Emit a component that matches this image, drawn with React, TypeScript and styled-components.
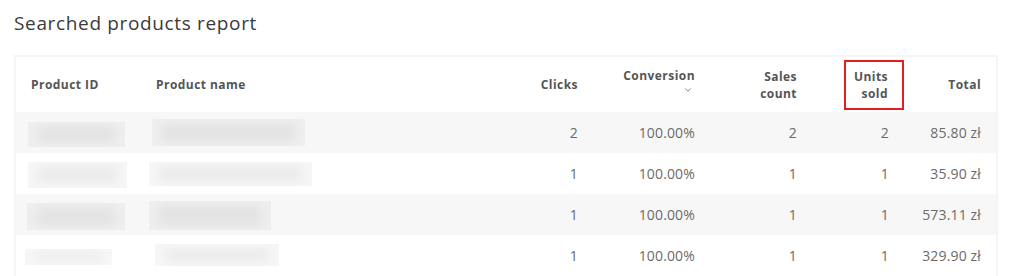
import React from "react";
import styled, { createGlobalStyle } from "styled-components";
import { ChevronDown } from "lucide-react";

type Blurred = { x: number; y: number; w: number; h: number };

type Row = {
  id: Blurred;
  name: Blurred;
  clicks: number;
  conversion: string;
  sales: number;
  units: number;
  total: string;
};

const rows: Row[] = [
  { id: { x: 12, y: 10, w: 97, h: 25 }, name: { x: 11, y: 7, w: 153, h: 27 }, clicks: 2, conversion: "100.00%", sales: 2, units: 2, total: "85.80 zł" },
  { id: { x: 12, y: 9, w: 99, h: 26 }, name: { x: 8, y: 9, w: 163, h: 24 }, clicks: 1, conversion: "100.00%", sales: 1, units: 1, total: "35.90 zł" },
  { id: { x: 11, y: 9, w: 98, h: 27 }, name: { x: 8, y: 7, w: 122, h: 29 }, clicks: 1, conversion: "100.00%", sales: 1, units: 1, total: "573.11 zł" },
  { id: { x: 9, y: 14, w: 87, h: 16 }, name: { x: 14, y: 9, w: 124, h: 22 }, clicks: 1, conversion: "100.00%", sales: 1, units: 1, total: "329.90 zł" },
];

const GlobalStyle = createGlobalStyle`
  body {
    margin: 0;
    background: #fff;
    font-family: "Open Sans", "Liberation Sans", sans-serif;
  }
`;

const Page = styled.div`
  padding: 10px 14px 0;
`;

const Title = styled.h2`
  margin: 0 0 19px;
  font-size: 19px;
  line-height: 26px;
  font-weight: 400;
  color: #3a3a3a;
  letter-spacing: 0.65px;
`;

const Frame = styled.div`
  border: 2px solid #f5f5f5;
  border-bottom: none;
`;

const Table = styled.table`
  width: 100%;
  border-collapse: collapse;
  table-layout: fixed;
`;

const Head = styled.th<{ $align?: "left" | "right"; $w: number; $pr?: number }>`
  box-sizing: border-box;
  width: ${(p) => p.$w}px;
  height: 55px;
  padding: 0 ${(p) => p.$pr ?? 15}px 0 15px;
  text-align: ${(p) => p.$align ?? "right"};
  vertical-align: middle;
  font-size: 12px;
  line-height: 17px;
  font-weight: 700;
  letter-spacing: 0.45px;
  color: #555;
`;

const Highlight = styled.div`
  display: inline-block;
  border: 2px solid #e41e1e;
  padding: 6px 14px 6px 8px;
  text-align: right;
`;

const Sort = styled.span`
  display: block;
  height: 17px;
  padding-right: 2px;
  color: #666;
  svg {
    display: block;
    margin: 1px 0 0 auto;
  }
`;

const BodyRow = styled.tr`
  height: 41px;
  &:nth-child(odd) {
    background: #f7f7f7;
  }
`;

const Cell = styled.td`
  padding: 0 15px;
  text-align: right;
  vertical-align: middle;
  font-size: 14px;
  letter-spacing: 0.15px;
  color: #6b6b6b;
`;

const BlurCell = styled.td`
  padding: 0;
  vertical-align: top;
`;

const Blur = styled.div<{ $x: number; $y: number; $w: number; $h: number }>`
  position: relative;
  overflow: hidden;
  margin: ${(p) => p.$y}px 0 0 ${(p) => p.$x}px;
  width: ${(p) => p.$w}px;
  height: ${(p) => p.$h}px;
  background: rgba(0, 0, 0, 0.035);
  &::after {
    content: "";
    position: absolute;
    inset: 5px 10px;
    background: rgba(0, 0, 0, 0.045);
    filter: blur(5px);
  }
`;

export default function App() {
  return (
    <Page>
      <GlobalStyle />
      <Title>Searched products report</Title>
      <Frame>
        <Table>
          <thead>
            <tr>
              <Head $align="left" $w={125}>Product ID</Head>
              <Head $align="left" $w={337}>Product name</Head>
              <Head $w={115}>Clicks</Head>
              <Head $w={117}>
                Conversion
                <Sort>
                  <ChevronDown size={10} strokeWidth={2} />
                </Sort>
              </Head>
              <Head $w={102}>Sales<br />count</Head>
              <Head $w={92} $pr={0}>
                <Highlight>Units<br />sold</Highlight>
              </Head>
              <Head $w={92}>Total</Head>
            </tr>
          </thead>
          <tbody>
            {rows.map((r, i) => (
              <BodyRow key={i}>
                <BlurCell>
                  <Blur $x={r.id.x} $y={r.id.y} $w={r.id.w} $h={r.id.h} />
                </BlurCell>
                <BlurCell>
                  <Blur $x={r.name.x} $y={r.name.y} $w={r.name.w} $h={r.name.h} />
                </BlurCell>
                <Cell>{r.clicks}</Cell>
                <Cell>{r.conversion}</Cell>
                <Cell>{r.sales}</Cell>
                <Cell>{r.units}</Cell>
                <Cell>{r.total}</Cell>
              </BodyRow>
            ))}
          </tbody>
        </Table>
      </Frame>
    </Page>
  );
}
